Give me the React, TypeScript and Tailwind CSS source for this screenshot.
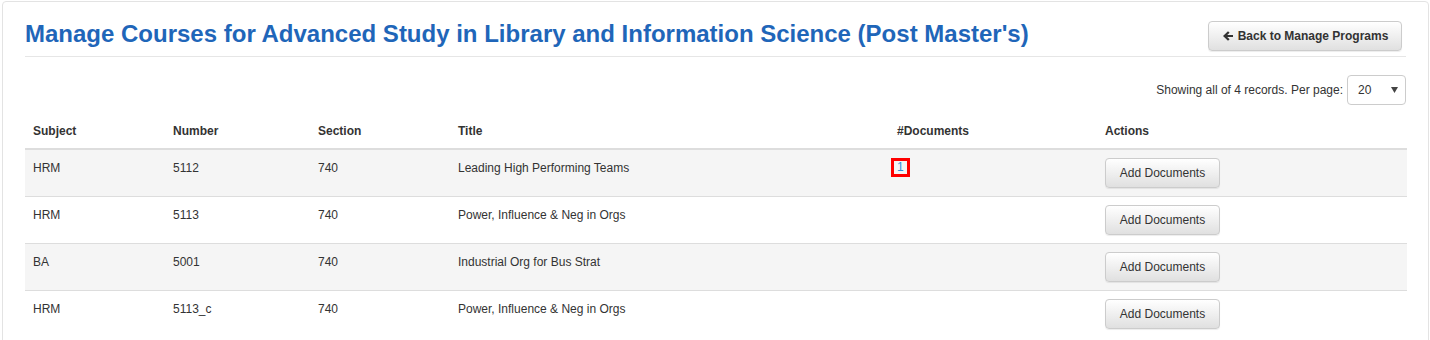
import React from "react";

const rows = [
  { subject: "HRM", number: "5112", section: "740", title: "Leading High Performing Teams", docs: "1" },
  { subject: "HRM", number: "5113", section: "740", title: "Power, Influence & Neg in Orgs", docs: "" },
  { subject: "BA", number: "5001", section: "740", title: "Industrial Org for Bus Strat", docs: "" },
  { subject: "HRM", number: "5113_c", section: "740", title: "Power, Influence & Neg in Orgs", docs: "" },
];

function ArrowLeft() {
  return (
    <svg width="12" height="12" viewBox="0 0 12 12" className="mr-[4px]" aria-hidden="true">
      <path d="M1 6 L6 1.2 L7.6 2.8 L5.2 5 H11 V7 H5.2 L7.6 9.2 L6 10.8 Z" fill="#333" />
    </svg>
  );
}

export default function App() {
  return (
    <div className="w-[1430px] h-[340px] overflow-hidden bg-white pt-[1px] pl-[2px] pr-[1px] text-[#333]" style={{ fontFamily: '"Liberation Sans", Arial, sans-serif' }}>
      <div className="border border-[#e3e3e3] rounded-[4px] h-[400px] px-[22px]">
        <div className="flex items-start justify-between border-b border-[#e6e6e6] h-[55px]">
          <h1 className="mt-[18px] text-[24px] leading-[28px] font-bold text-[#1f66b9]">
            Manage Courses for Advanced Study in Library and Information Science (Post Master's)
          </h1>
          <button className="mt-[19px] mr-[4px] h-[30px] w-[194px] justify-center flex items-center text-[12px] font-bold text-[#333] border border-[#ccc] rounded-[4px] bg-gradient-to-b from-white to-[#e0e0e0] shadow-[0_1px_1px_rgba(0,0,0,0.075)]">
            <ArrowLeft />
            Back to Manage Programs
          </button>
        </div>
        <div className="flex items-center justify-end mt-[18px] h-[30px]">
          <span className="text-[12px] mr-[4px]">Showing all of 4 records. Per page:</span>
          <div className="w-[59px] h-[30px] border border-[#ccc] rounded-[4px] bg-white flex items-center justify-between pl-[10px] pr-[7px] text-[12px]">
            <span>20</span>
            <svg width="7" height="6" viewBox="0 0 7 6"><path d="M0 0 H7 L3.5 6 Z" fill="#444" /></svg>
          </div>
        </div>
        <table className="w-[1382px] table-fixed border-collapse mt-[10px] text-[12px]">
          <colgroup>
            <col className="w-[140px]" />
            <col className="w-[145px]" />
            <col className="w-[140px]" />
            <col className="w-[439px]" />
            <col className="w-[208px]" />
            <col className="w-[310px]" />
          </colgroup>
          <thead>
            <tr className="border-b-2 border-[#ddd]">
              {["Subject", "Number", "Section", "Title", "#Documents", "Actions"].map((h) => (
                <th key={h} className="text-left font-bold p-[8px] leading-[17px]">{h}</th>
              ))}
            </tr>
          </thead>
          <tbody>
            {rows.map((r, i) => (
              <tr key={i} className={`border-t border-[#ddd] ${i % 2 === 0 ? "bg-[#f5f5f5]" : "bg-white"}`}>
                <td className="px-[8px] pt-[10px] pb-[8px] align-top leading-[17px]">{r.subject}</td>
                <td className="px-[8px] pt-[10px] pb-[8px] align-top leading-[17px]">{r.number}</td>
                <td className="px-[8px] pt-[10px] pb-[8px] align-top leading-[17px]">{r.section}</td>
                <td className="px-[8px] pt-[10px] pb-[8px] align-top leading-[17px]">{r.title}</td>
                <td className="px-[8px] pt-[8px] pb-[8px] align-top leading-[17px]">
                  {r.docs && (
                    <span className="inline-block ml-[-6px] border-[3px] border-[#f00] px-[3px] leading-[13px] h-[19px] text-[#2d8fd8]">{r.docs}</span>
                  )}
                </td>
                <td className="p-[8px] align-top">
                  <button className="h-[30px] w-[115px] text-[12px] text-[#333] border border-[#ccc] rounded-[4px] bg-gradient-to-b from-white to-[#e0e0e0] shadow-[0_1px_1px_rgba(0,0,0,0.075)]">
                    Add Documents
                  </button>
                </td>
              </tr>
            ))}
          </tbody>
        </table>
      </div>
    </div>
  );
}
